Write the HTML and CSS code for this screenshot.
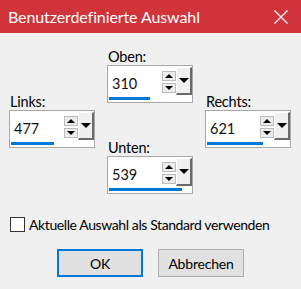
FILE: index.html
```html
<!DOCTYPE html>
<html lang="de">

<head>
    <meta charset="UTF-8" />
    <title>Benutzerdefinierte Auswahl</title>
    <link rel="stylesheet" href="styles.css">
</head>

<body>
    <div class="dialog">
        <div class="titlebar">
            <span class="title">Benutzerdefinierte Auswahl</span>
            <svg class="close" width="14" height="14" viewBox="0 0 14 14">
                <path d="M0.5 0.5 L13.5 13.5 M13.5 0.5 L0.5 13.5" stroke="#fff" stroke-width="1.2" fill="none" />
            </svg>
        </div>

        <div class="fields">
            <div class="col side">
                <div class="field">
                    <label>Links:</label>
                    <div class="spinner">
                        <div class="spin-row">
                            <span class="value">477</span>
                            <div class="arrows">
                                <span class="arrow up"></span>
                                <span class="arrow down"></span>
                            </div>
                            <span class="drop"></span>
                        </div>
                        <div class="bar"><span class="fill" style="width:43px"></span></div>
                    </div>
                </div>
            </div>

            <div class="col mid">
                <div class="field">
                    <label>Oben:</label>
                    <div class="spinner">
                        <div class="spin-row">
                            <span class="value">310</span>
                            <div class="arrows">
                                <span class="arrow up"></span>
                                <span class="arrow down"></span>
                            </div>
                            <span class="drop"></span>
                        </div>
                        <div class="bar"><span class="fill" style="width:41px"></span></div>
                    </div>
                </div>
                <div class="field">
                    <label>Unten:</label>
                    <div class="spinner">
                        <div class="spin-row">
                            <span class="value">539</span>
                            <div class="arrows">
                                <span class="arrow up"></span>
                                <span class="arrow down"></span>
                            </div>
                            <span class="drop"></span>
                        </div>
                        <div class="bar"><span class="fill" style="width:73px"></span></div>
                    </div>
                </div>
            </div>

            <div class="col side">
                <div class="field">
                    <label>Rechts:</label>
                    <div class="spinner">
                        <div class="spin-row">
                            <span class="value">621</span>
                            <div class="arrows">
                                <span class="arrow up"></span>
                                <span class="arrow down"></span>
                            </div>
                            <span class="drop"></span>
                        </div>
                        <div class="bar"><span class="fill" style="width:56px"></span></div>
                    </div>
                </div>
            </div>
        </div>

        <label class="check">
            <span class="box"></span>
            <span class="check-text">Aktuelle Auswahl als Standard verwenden</span>
        </label>

        <div class="buttons">
            <button class="btn default">OK</button>
            <button class="btn">Abbrechen</button>
        </div>
    </div>
</body>

</html>
```

FILE: styles.css
```css
body {
    margin: 0;
    font-family: Lato, "Liberation Sans", sans-serif;
    font-size: 14px;
    color: #000;
    background-color: #f0f0f0;
}

.dialog {
    width: 301px;
    height: 289px;
    overflow: hidden;
    background-color: #f0f0f0;
}

.titlebar {
    height: 33px;
    background-color: #d0343a;
    display: flex;
    align-items: center;
    justify-content: space-between;
    padding: 0 13px 0 8px;
}

.title {
    color: #fff;
    font-size: 16px;
    letter-spacing: -0.1px;
}

.close {
    display: block;
}

/* spinner layout */
.fields {
    display: grid;
    grid-template-columns: 86px 86px 86px;
    column-gap: 12px;
    padding-left: 9px;
}

.col {
    display: flex;
    flex-direction: column;
}

.mid {
    padding-top: 16px;
    gap: 37px;
}

.side {
    padding-top: 61px;
}

.field label {
    display: block;
    line-height: 16px;
    font-size: 14.5px;
    letter-spacing: -0.2px;
    padding-left: 1px;
}

.spinner {
    width: 86px;
    height: 38px;
    box-sizing: border-box;
    border: 1px solid #a8a8a8;
    background-color: #fff;
    display: flex;
    flex-direction: column;
}

.spin-row {
    display: flex;
    height: 30px;
}

.value {
    flex: 1;
    padding-left: 4px;
    line-height: 35px;
    font-size: 14.5px;
    color: #111;
}

.arrows {
    width: 14px;
    display: flex;
    flex-direction: column;
    gap: 2px;
    padding-top: 5px;
}

.arrow {
    height: 10px;
    box-sizing: border-box;
    border: 1px solid #bcbcbc;
    background-color: #ececec;
    display: flex;
    align-items: center;
    justify-content: center;
}

.arrow::after {
    content: "";
    width: 0;
    height: 0;
    border-left: 4px solid transparent;
    border-right: 4px solid transparent;
}

.arrow.up::after {
    border-bottom: 4px solid #000;
}

.arrow.down::after {
    border-top: 4px solid #000;
}

.drop {
    width: 16px;
    height: 28px;
    margin-top: 1px;
    box-sizing: border-box;
    background-color: #f0f0f0;
    border-top: 1px solid #fff;
    border-left: 1px solid #fff;
    border-right: 2px solid #6a6a6a;
    border-bottom: 2px solid #6a6a6a;
    display: flex;
    align-items: center;
    justify-content: center;
}

.drop::after {
    content: "";
    width: 0;
    height: 0;
    border-left: 5px solid transparent;
    border-right: 5px solid transparent;
    border-top: 5px solid #000;
}

.bar {
    margin: 1px 1px 0 1px;
    height: 3px;
}

.fill {
    display: block;
    height: 3px;
    background-color: #0078d7;
}

/* checkbox */
.check {
    display: flex;
    align-items: center;
    gap: 4px;
    margin: 22px 0 0 10px;
    font-size: 14px;
    letter-spacing: -0.4px;
    white-space: nowrap;
}

.check .box {
    width: 15px;
    height: 15px;
    box-sizing: border-box;
    border: 1px solid #333;
    background-color: #fff;
}

.buttons {
    display: flex;
    gap: 15px;
    margin: 16px 0 0 57px;
}

.btn {
    width: 86px;
    height: 28px;
    box-sizing: border-box;
    font-family: inherit;
    font-size: 14px;
    letter-spacing: -0.2px;
    color: #000;
    background-color: #e1e1e1;
    border: 1px solid #adadad;
    padding: 0;
}

.btn.default {
    border: 2px solid #0078d7;
}
```
